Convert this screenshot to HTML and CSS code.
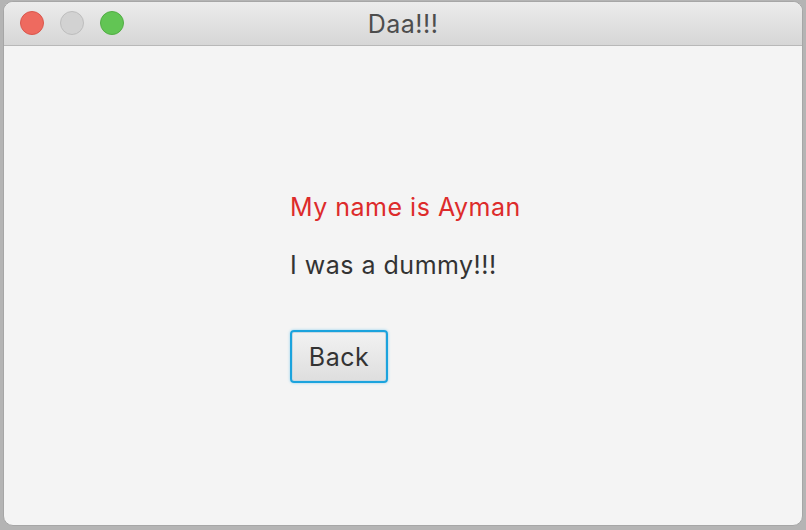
FILE: index.html
```html
<!DOCTYPE html>
<html>
<head>
<meta charset="utf-8">
<link rel="stylesheet" href="styles.css">
</head>
<body>
<div class="window">
  <div class="titlebar">
    <div class="lights">
      <span class="light red"></span>
      <span class="light gray"></span>
      <span class="light green"></span>
    </div>
    <div class="title">Daa!!!</div>
  </div>
  <div class="content">
    <div class="stack">
      <div class="name">My name is Ayman</div>
      <div class="dummy">I was a dummy!!!</div>
      <button class="back">Back</button>
    </div>
  </div>
</div>
</body>
</html>
```
FILE: styles.css
```css
html, body {
  margin: 0;
  padding: 0;
  width: 806px;
  height: 530px;
  overflow: hidden;
  background: #b4b4b4;
}
body {
  padding: 1px 3px 4px 3px;
  box-sizing: border-box;
  font-family: Inter, "Liberation Sans", sans-serif;
  letter-spacing: 0.5px;
}
.window {
  height: 100%;
  border-radius: 10px;
  overflow: hidden;
  background: #f4f4f4;
  display: flex;
  flex-direction: column;
  border: 1px solid #a6a6a6;
  box-sizing: border-box;
}
.titlebar {
  height: 43px;
  flex: none;
  background: linear-gradient(#ececec, #d6d6d6);
  border-bottom: 1px solid #b8b8b8;
  position: relative;
  display: flex;
  align-items: center;
  justify-content: center;
}
.lights {
  position: absolute;
  left: 16px;
  top: 9px;
  display: flex;
  gap: 16px;
}
.light {
  width: 24px;
  height: 24px;
  border-radius: 50%;
  box-sizing: border-box;
}
.red { background: #ee6a5f; border: 1px solid #d9574d; }
.gray { background: #d2d2d2; border: 1px solid #bdbdbd; }
.green { background: #62c554; border: 1px solid #52ad45; }
.title {
  font-size: 25px;
  color: #4d4d4d;
}
.content {
  flex: 1;
  padding-left: 286px;
  padding-top: 145px;
}
.stack {
  display: flex;
  flex-direction: column;
  align-items: flex-start;
}
.name {
  font-size: 25px;
  color: #dd2b2b;
  line-height: 32px;
}
.dummy {
  font-size: 25px;
  color: #333333;
  line-height: 32px;
  margin-top: 26px;
}
.back {
  margin-top: 49px;
  font-family: inherit;
  letter-spacing: inherit;
  font-size: 25px;
  color: #333;
  width: 98px;
  height: 53px;
  border: 2px solid #1ba3dd;
  border-radius: 4px;
  background: linear-gradient(#f2f2f2, #dedede);
  box-shadow: inset 0 0 0 1px #c9d9e2, 0 0 3px #8fd0ee;
  padding: 0;
}
```
